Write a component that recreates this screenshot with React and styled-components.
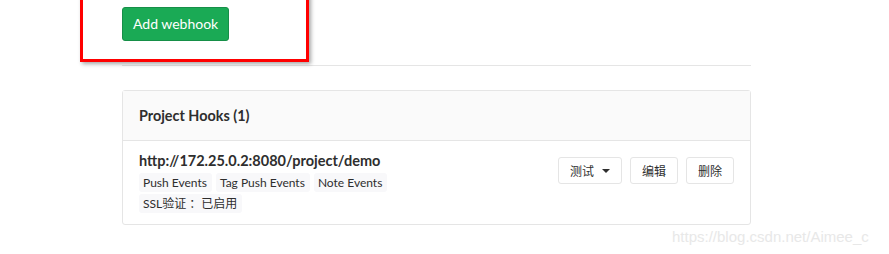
import React from 'react';
import styled, { createGlobalStyle } from 'styled-components';

const GlobalStyle = createGlobalStyle`
	html, body {
		margin: 0;
		padding: 0;
		background: #fff;
	}
	body {
		font-family: Lato, "Noto Sans CJK SC", sans-serif;
		color: #2e2e2e;
	}
`;

const Page = styled.div`
	position: relative;
	width: 889px;
	height: 254px;
	overflow: hidden;
	background: #fff;
`;

const Content = styled.div`
	margin-left: 122px;
	width: 629px;
	padding-top: 7px;
`;

const Toolbar = styled.div`
	padding-bottom: 24px;
	border-bottom: 1px solid #e5e5e5;
`;

const PrimaryButton = styled.button`
	height: 34px;
	padding: 0 10px;
	background: #1aaa55;
	border: 1px solid #168f48;
	border-radius: 3px;
	color: #fff;
	font-family: Lato, sans-serif;
	font-size: 14px;
	line-height: 32px;
`;

const Panel = styled.div`
	margin-top: 24px;
	border: 1px solid #e5e5e5;
	border-radius: 3px;
`;

const PanelHeader = styled.div`
	height: 49px;
	display: flex;
	align-items: center;
	padding: 0 16px;
	background: #fafafa;
	border-bottom: 1px solid #e5e5e5;
	font-size: 14.4px;
	font-weight: 700;
	color: #2e2e2e;
`;

const HookRow = styled.div`
	display: flex;
	justify-content: space-between;
	align-items: flex-start;
	padding: 10px 16px 11px 16px;
`;

const HookInfo = styled.div`
	display: flex;
	flex-direction: column;
	gap: 2px;
`;

const HookUrl = styled.div`
	font-size: 14.5px;
	font-weight: 700;
	line-height: 20px;
	color: #2e2e2e;
`;

const TagList = styled.div`
	display: flex;
	gap: 4px;
`;

const Tag = styled.span`
	display: inline-block;
	padding: 0 5px 0 4px;
	height: 19px;
	line-height: 19px;
	background: #f8f8fa;
	border-radius: 3px;
	font-size: 12px;
	color: #2e2e2e;
`;

const Actions = styled.div`
	display: flex;
	gap: 8px;
	margin-top: 6px;
`;

const ActionButton = styled.button`
	display: flex;
	align-items: center;
	gap: 8px;
	height: 27px;
	padding: 0 11px;
	background: #fff;
	border: 1px solid #e5e5e5;
	border-radius: 3px;
	font-family: "Noto Sans CJK SC", sans-serif;
	font-size: 12px;
	color: #2e2e2e;
`;

const Caret = styled.span`
	width: 0;
	height: 0;
	border-left: 4px solid transparent;
	border-right: 4px solid transparent;
	border-top: 4px solid #2e2e2e;
`;

const Highlight = styled.div`
	position: absolute;
	left: 80px;
	top: -10px;
	width: 223px;
	height: 66px;
	border: 3px solid #ff0000;
	box-shadow: 2px 2px 4px rgba(0, 0, 0, 0.35);
	pointer-events: none;
`;

const Watermark = styled.div`
	position: absolute;
	left: 672px;
	top: 228px;
	font-family: "Liberation Sans", Arial, sans-serif;
	font-size: 15px;
	color: #e8e8e8;
`;

export default function App() {
	const events = ['Push Events', 'Tag Push Events', 'Note Events'];
	return (
		<Page>
			<GlobalStyle />
			<Content>
				<Toolbar>
					<PrimaryButton>Add webhook</PrimaryButton>
				</Toolbar>
				<Panel>
					<PanelHeader>Project Hooks (1)</PanelHeader>
					<HookRow>
						<HookInfo>
							<HookUrl>http://172.25.0.2:8080/project/demo</HookUrl>
							<TagList>
								{events.map((e) => <Tag key={e}>{e}</Tag>)}
							</TagList>
							<TagList>
								<Tag>SSL验证 ：已启用</Tag>
							</TagList>
						</HookInfo>
						<Actions>
							<ActionButton>测试 <Caret /></ActionButton>
							<ActionButton>编辑</ActionButton>
							<ActionButton>删除</ActionButton>
						</Actions>
					</HookRow>
				</Panel>
			</Content>
			<Highlight />
			<Watermark>https://blog.csdn.net/Aimee_c</Watermark>
		</Page>
	);
}
